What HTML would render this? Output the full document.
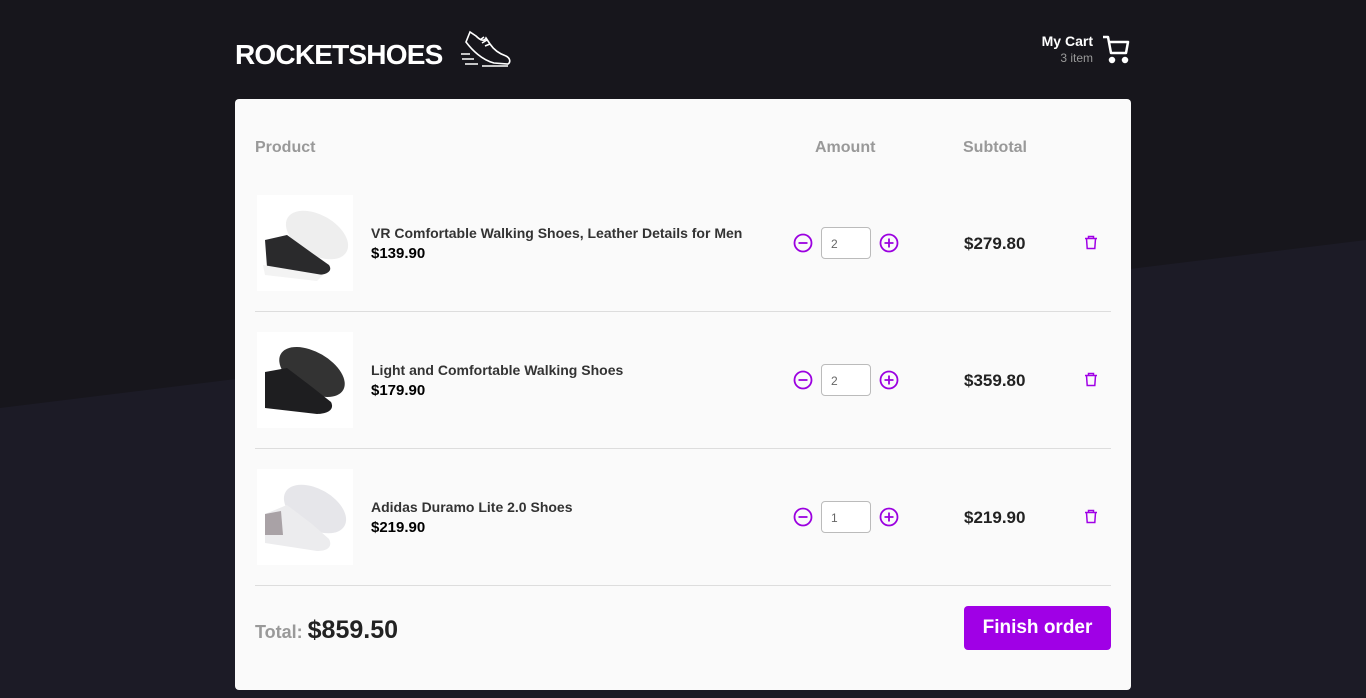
<!DOCTYPE html>
<html><head><meta charset="utf-8"><style>
*{margin:0;padding:0;box-sizing:border-box}
body{width:1366px;height:698px;overflow:hidden;font-family:"Liberation Sans",sans-serif;background:#17161c;position:relative}
.bg{position:absolute;inset:0}
header{position:absolute;left:235px;top:28px;width:896px;height:60px}
.logo{position:absolute;left:0;top:11px;color:#fff;font-weight:bold;font-size:28px;letter-spacing:-0.8px}
.cart{position:absolute;right:0;top:5px;text-align:right;padding-right:38px}
.cart b{display:block;color:#fff;font-size:14px}
.cart span{color:#999;font-size:12px}
.card{position:absolute;left:235px;top:99px;width:896px;height:591px;background:#fafafa;border-radius:4px}
.th{position:absolute;top:40px;color:#999;font-weight:bold;font-size:16px}
.row{position:absolute;left:20px;width:856px;height:137px;border-bottom:1px solid #ddd}
.img{position:absolute;left:2px;top:20px;width:96px;height:96px;background:#fff}
.name{position:absolute;left:116px;top:50px;font-size:14px;color:#333;font-weight:bold}
.price{position:absolute;left:116px;top:70px;font-size:15px;color:#000;font-weight:bold}
.qty{position:absolute;left:566px;top:52px;width:50px;height:32px;border:1px solid #bbb;border-radius:4px;background:#fff;font-size:12px;color:#666;padding:9px 0 0 9px}
.sub{position:absolute;left:709px;top:59px;font-size:17px;font-weight:bold;color:#222}
svg.ic{position:absolute}
.total{position:absolute;left:20px;top:517px;color:#999;font-weight:bold;font-size:18px}
.total b{color:#222;font-size:25px}
.btn{position:absolute;left:729px;top:507px;width:147px;height:44px;background:#a000e6;border-radius:4px;color:#fff;font-weight:bold;font-size:19px;text-align:center;line-height:44px}
</style></head><body>
<svg class="bg" width="1366" height="698"><polygon points="0,408 1366,240 1366,698 0,698" fill="#1c1b26"/></svg>
<header>
<div class="logo">ROCKETSHOES</div>
<svg style="position:absolute;left:225px;top:2px" width="52" height="40" viewBox="0 0 52 40" fill="none" stroke="#fff" stroke-width="1.6"><path d="M10 2 L6 12 C12 20 22 30 34 33 L48 34 C51 32 50 28 46 26 C40 24 34 20 30 14 L26 8 C24 12 20 10 16 6 Z"/><path d="M20 10 L24 7 M22 13 L27 10 M25 16 L30 14"/><path d="M1 24 H10 M2 29 H14 M5 34 H18 M22 36 H48"/></svg>
<div class="cart"><b>My Cart</b><span>3 item</span></div>
<svg style="position:absolute;right:0;top:6px" width="30" height="30" viewBox="0 0 30 30" fill="none" stroke="#fff" stroke-width="2.5" stroke-linejoin="round"><path d="M2 3 H7 L10 19 H25 L27 8 H8"/><circle cx="11" cy="26" r="2" fill="#fff"/><circle cx="24" cy="26" r="2" fill="#fff"/></svg>
</header>
<div class="card">
<div class="th" style="left:20px">Product</div>
<div class="th" style="left:580px">Amount</div>
<div class="th" style="left:728px">Subtotal</div>

<div class="row" style="top:76px">
<div class="img"><svg width="96" height="96"><ellipse cx="60" cy="40" rx="34" ry="20" fill="#eee" transform="rotate(30 60 40)"/><path d="M8 45 L30 40 L55 58 L72 70 C76 76 70 80 60 80 L10 72 Z" fill="#2a2a2c"/><path d="M6 70 L66 80 L60 86 L8 80 Z" fill="#f3f3f3"/></svg></div>
<div class="name">VR Comfortable Walking Shoes, Leather Details for Men</div>
<div class="price">$139.90</div>
<div class="qty">2</div><div class="sub">$279.80</div></div>

<div class="row" style="top:213px">
<div class="img"><svg width="96" height="96"><ellipse cx="55" cy="40" rx="36" ry="20" fill="#333" transform="rotate(30 55 40)"/><path d="M8 40 L30 36 L55 55 L74 70 C78 78 70 82 60 82 L8 76 Z" fill="#1e1e20"/></svg></div>
<div class="name">Light and Comfortable Walking Shoes</div>
<div class="price">$179.90</div>
<div class="qty">2</div><div class="sub">$359.80</div></div>

<div class="row" style="top:350px">
<div class="img"><svg width="96" height="96"><ellipse cx="58" cy="40" rx="34" ry="20" fill="#e6e6ea" transform="rotate(30 58 40)"/><path d="M8 45 L30 36 L55 55 L72 70 C76 78 70 82 60 82 L8 74 Z" fill="#ececee"/><path d="M8 45 L24 42 L26 66 L8 66 Z" fill="#a9a2a6"/></svg></div>
<div class="name">Adidas Duramo Lite 2.0 Shoes</div>
<div class="price">$219.90</div>
<div class="qty">1</div><div class="sub">$219.90</div></div>

<svg class="ic" style="left:558px;top:134px" width="20" height="300" fill="none" stroke="#9b00e0" stroke-width="1.8"><g><circle cx="10" cy="10" r="8.5"/><path d="M5.5 10 H14.5"/></g><g transform="translate(0,137)"><circle cx="10" cy="10" r="8.5"/><path d="M5.5 10 H14.5"/></g><g transform="translate(0,274)"><circle cx="10" cy="10" r="8.5"/><path d="M5.5 10 H14.5"/></g></svg>
<svg class="ic" style="left:644px;top:134px" width="20" height="300" fill="none" stroke="#9b00e0" stroke-width="1.8"><g><circle cx="10" cy="10" r="8.5"/><path d="M5.5 10 H14.5 M10 5.5 V14.5"/></g><g transform="translate(0,137)"><circle cx="10" cy="10" r="8.5"/><path d="M5.5 10 H14.5 M10 5.5 V14.5"/></g><g transform="translate(0,274)"><circle cx="10" cy="10" r="8.5"/><path d="M5.5 10 H14.5 M10 5.5 V14.5"/></g></svg>
<svg class="ic" style="left:849px;top:136px" width="14" height="300" fill="none" stroke="#a000e6" stroke-width="1.5"><g><path d="M1 3.5 H13 M4.5 3.5 V1.5 H9.5 V3.5 M2.5 3.5 L3.2 13.5 H10.8 L11.5 3.5"/></g><g transform="translate(0,137)"><path d="M1 3.5 H13 M4.5 3.5 V1.5 H9.5 V3.5 M2.5 3.5 L3.2 13.5 H10.8 L11.5 3.5"/></g><g transform="translate(0,274)"><path d="M1 3.5 H13 M4.5 3.5 V1.5 H9.5 V3.5 M2.5 3.5 L3.2 13.5 H10.8 L11.5 3.5"/></g></svg>

<div class="total">Total: <b>$859.50</b></div>
<div class="btn">Finish order</div>
</div>
</body></html>
